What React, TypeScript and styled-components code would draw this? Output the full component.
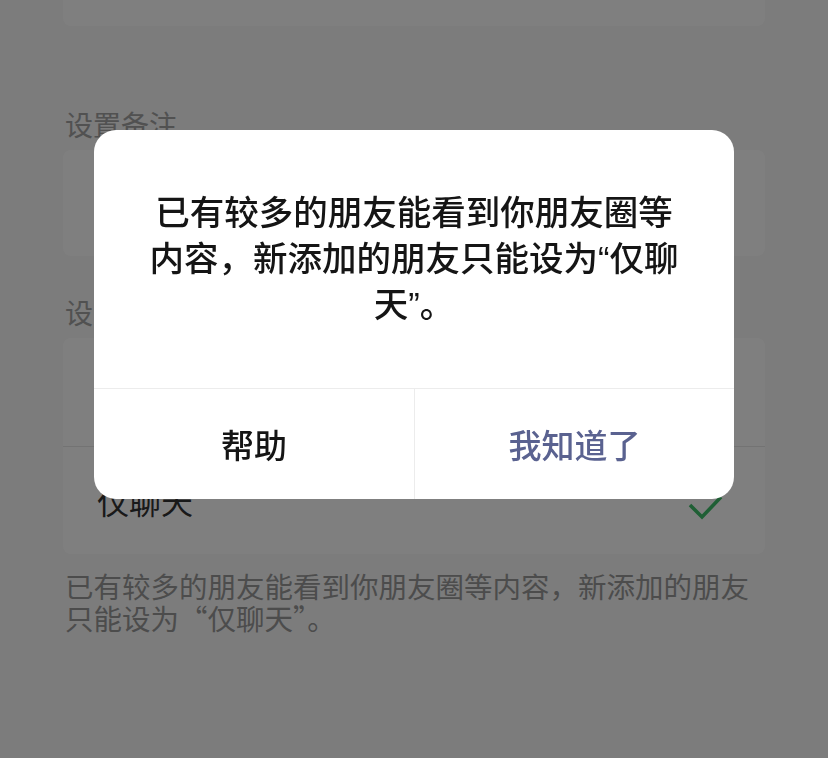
import styled, { createGlobalStyle } from "styled-components";

// Page defaults.
const GlobalStyle = createGlobalStyle`
  html, body {
    margin: 0;
    padding: 0;
    background: #f8f8f8;
    font-family: "Noto Sans CJK SC", "Noto Sans", sans-serif;
  }
`;

// Settings page behind the dialog.
const Page = styled.div`
  min-height: 758px;
  padding: 0 63px 0 63px;
  box-sizing: border-box;
`;

// White rounded group of rows.
const Card = styled.div<{ $height?: number }>`
  background: #fff;
  border-radius: 8px;
  height: ${(p) => (p.$height ? `${p.$height}px` : "auto")};
`;

// Tail of the card cut off by the top of the screen.
const TopCard = styled(Card)`
  border-radius: 0 0 8px 8px;
`;

// Small gray section label.
const Label = styled.div<{ $top: number }>`
  margin: ${(p) => p.$top}px 0 6px 2px;
  font-size: 28px;
  line-height: 40px;
  color: #a2a2a2;
`;

// One option row.
const Row = styled.div<{ $divider?: boolean }>`
  height: 108px;
  display: flex;
  align-items: center;
  justify-content: space-between;
  padding: 0 42px 0 34px;
  font-size: 32px;
  color: #333;
  box-shadow: ${(p) => (p.$divider ? "inset 0 1px 0 #e6e6e6" : "none")};
`;

const CheckMark = styled.svg`
  margin-top: 14px;
`;

// Hint under the options.
const Footnote = styled.p`
  margin: 16px 0 0 2px;
  font-size: 28.5px;
  line-height: 32px;
  color: #989898;
`;

// Dark veil over the page.
const Overlay = styled.div`
  position: fixed;
  inset: 0;
  background: rgba(0, 0, 0, 0.5);
  display: flex;
  justify-content: center;
  align-items: flex-start;
  padding-top: 130px;
`;

const Dialog = styled.div`
  width: 640px;
  background: #fff;
  border-radius: 22px;
  overflow: hidden;
`;

const Message = styled.div`
  padding: 60px 55px;
  text-align: center;
  font-family: "Liberation Sans", "Noto Sans CJK SC", sans-serif;
  font-size: 34.5px;
  line-height: 46px;
  font-weight: 500;
  color: #151515;
`;

const Actions = styled.div`
  display: grid;
  grid-template-columns: 1fr 1fr;
  border-top: 1px solid #ececec;
`;

const Action = styled.button<{ $primary?: boolean }>`
  height: 110px;
  border: 0;
  background: none;
  padding: 0;
  font-family: "Noto Sans CJK SC", sans-serif;
  font-size: 33px;
  font-weight: 500;
  color: ${(p) => (p.$primary ? "#5a6290" : "#151515")};
  & + & {
    border-left: 1px solid #ececec;
  }
`;

function Check() {
  return (
    <CheckMark width="36" height="28" viewBox="0 0 36 28">
      <polyline
        points="3,12 15,24 34,4"
        fill="none"
        stroke="#3fbf6a"
        strokeWidth="3.6"
      />
    </CheckMark>
  );
}

export default function App() {
  return (
    <>
      <GlobalStyle />
      <Page>
        <TopCard $height={26} />
        <Label $top={78}>设置备注</Label>
        <Card $height={106} />
        <Label $top={36}>设置朋友权限</Label>
        <Card>
          <Row>聊天、朋友圈、微信运动等</Row>
          <Row $divider>
            仅聊天
            <Check />
          </Row>
        </Card>
        <Footnote>
          已有较多的朋友能看到你朋友圈等内容，新添加的朋友只能设为“仅聊天”。
        </Footnote>
      </Page>
      <Overlay>
        <Dialog>
          <Message>
            已有较多的朋友能看到你朋友圈等内容，新添加的朋友只能设为“仅聊天”。
          </Message>
          <Actions>
            <Action>帮助</Action>
            <Action $primary>我知道了</Action>
          </Actions>
        </Dialog>
      </Overlay>
    </>
  );
}
